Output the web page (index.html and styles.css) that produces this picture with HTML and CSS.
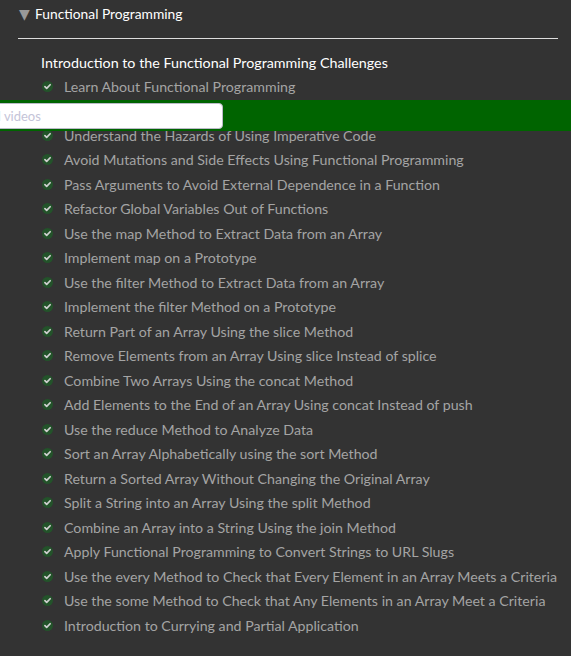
FILE: index.html
```html
<!DOCTYPE html>
<html>
<head>
<meta charset="utf-8">
<link rel="stylesheet" href="styles.css">
</head>
<body>
<div class="page">
  <div class="block-head">
    <span class="caret">&#9660;</span>
    <span class="block-title">Functional Programming</span>
  </div>
  <div class="rule"></div>
  <div class="section">
    <h4 class="section-title">Introduction to the Functional Programming Challenges</h4>
    <ul class="list">
      <li><svg class="check" viewBox="0 0 12 12"><circle cx="6" cy="6" r="6"/><path d="M3.2 6.2 L5.1 8 L8.9 4.1"/></svg><span>Learn About Functional Programming</span></li>
      <li><svg class="check" viewBox="0 0 12 12"><circle cx="6" cy="6" r="6"/><path d="M3.2 6.2 L5.1 8 L8.9 4.1"/></svg><span>Understand Functional Programming Terminology</span></li>
      <li><svg class="check" viewBox="0 0 12 12"><circle cx="6" cy="6" r="6"/><path d="M3.2 6.2 L5.1 8 L8.9 4.1"/></svg><span>Understand the Hazards of Using Imperative Code</span></li>
      <li><svg class="check" viewBox="0 0 12 12"><circle cx="6" cy="6" r="6"/><path d="M3.2 6.2 L5.1 8 L8.9 4.1"/></svg><span>Avoid Mutations and Side Effects Using Functional Programming</span></li>
      <li><svg class="check" viewBox="0 0 12 12"><circle cx="6" cy="6" r="6"/><path d="M3.2 6.2 L5.1 8 L8.9 4.1"/></svg><span>Pass Arguments to Avoid External Dependence in a Function</span></li>
      <li><svg class="check" viewBox="0 0 12 12"><circle cx="6" cy="6" r="6"/><path d="M3.2 6.2 L5.1 8 L8.9 4.1"/></svg><span>Refactor Global Variables Out of Functions</span></li>
      <li><svg class="check" viewBox="0 0 12 12"><circle cx="6" cy="6" r="6"/><path d="M3.2 6.2 L5.1 8 L8.9 4.1"/></svg><span>Use the map Method to Extract Data from an Array</span></li>
      <li><svg class="check" viewBox="0 0 12 12"><circle cx="6" cy="6" r="6"/><path d="M3.2 6.2 L5.1 8 L8.9 4.1"/></svg><span>Implement map on a Prototype</span></li>
      <li><svg class="check" viewBox="0 0 12 12"><circle cx="6" cy="6" r="6"/><path d="M3.2 6.2 L5.1 8 L8.9 4.1"/></svg><span>Use the filter Method to Extract Data from an Array</span></li>
      <li><svg class="check" viewBox="0 0 12 12"><circle cx="6" cy="6" r="6"/><path d="M3.2 6.2 L5.1 8 L8.9 4.1"/></svg><span>Implement the filter Method on a Prototype</span></li>
      <li><svg class="check" viewBox="0 0 12 12"><circle cx="6" cy="6" r="6"/><path d="M3.2 6.2 L5.1 8 L8.9 4.1"/></svg><span>Return Part of an Array Using the slice Method</span></li>
      <li><svg class="check" viewBox="0 0 12 12"><circle cx="6" cy="6" r="6"/><path d="M3.2 6.2 L5.1 8 L8.9 4.1"/></svg><span>Remove Elements from an Array Using slice Instead of splice</span></li>
      <li><svg class="check" viewBox="0 0 12 12"><circle cx="6" cy="6" r="6"/><path d="M3.2 6.2 L5.1 8 L8.9 4.1"/></svg><span>Combine Two Arrays Using the concat Method</span></li>
      <li><svg class="check" viewBox="0 0 12 12"><circle cx="6" cy="6" r="6"/><path d="M3.2 6.2 L5.1 8 L8.9 4.1"/></svg><span>Add Elements to the End of an Array Using concat Instead of push</span></li>
      <li><svg class="check" viewBox="0 0 12 12"><circle cx="6" cy="6" r="6"/><path d="M3.2 6.2 L5.1 8 L8.9 4.1"/></svg><span>Use the reduce Method to Analyze Data</span></li>
      <li><svg class="check" viewBox="0 0 12 12"><circle cx="6" cy="6" r="6"/><path d="M3.2 6.2 L5.1 8 L8.9 4.1"/></svg><span>Sort an Array Alphabetically using the sort Method</span></li>
      <li><svg class="check" viewBox="0 0 12 12"><circle cx="6" cy="6" r="6"/><path d="M3.2 6.2 L5.1 8 L8.9 4.1"/></svg><span>Return a Sorted Array Without Changing the Original Array</span></li>
      <li><svg class="check" viewBox="0 0 12 12"><circle cx="6" cy="6" r="6"/><path d="M3.2 6.2 L5.1 8 L8.9 4.1"/></svg><span>Split a String into an Array Using the split Method</span></li>
      <li><svg class="check" viewBox="0 0 12 12"><circle cx="6" cy="6" r="6"/><path d="M3.2 6.2 L5.1 8 L8.9 4.1"/></svg><span>Combine an Array into a String Using the join Method</span></li>
      <li><svg class="check" viewBox="0 0 12 12"><circle cx="6" cy="6" r="6"/><path d="M3.2 6.2 L5.1 8 L8.9 4.1"/></svg><span>Apply Functional Programming to Convert Strings to URL Slugs</span></li>
      <li><svg class="check" viewBox="0 0 12 12"><circle cx="6" cy="6" r="6"/><path d="M3.2 6.2 L5.1 8 L8.9 4.1"/></svg><span>Use the every Method to Check that Every Element in an Array Meets a Criteria</span></li>
      <li><svg class="check" viewBox="0 0 12 12"><circle cx="6" cy="6" r="6"/><path d="M3.2 6.2 L5.1 8 L8.9 4.1"/></svg><span>Use the some Method to Check that Any Elements in an Array Meet a Criteria</span></li>
      <li><svg class="check" viewBox="0 0 12 12"><circle cx="6" cy="6" r="6"/><path d="M3.2 6.2 L5.1 8 L8.9 4.1"/></svg><span>Introduction to Currying and Partial Application</span></li>
    </ul>
  </div>
</div>
<div class="search-bar">
  <input class="search-input" type="text" placeholder="Search tutorial videos">
</div>
</body>
</html>
```
FILE: styles.css
```css
html, body {
  margin: 0;
  padding: 0;
  background: #333333;
  font-family: "Lato", "Noto Sans", sans-serif;
  overflow: hidden;
}

.page {
  padding: 0 13px 0 18px;
}

.block-head {
  display: flex;
  align-items: center;
  height: 27px;
  padding-left: 1px;
}

.caret {
  color: #999999;
  font-size: 14px;
  width: 16px;
  line-height: 1;
  font-family: "DejaVu Sans", sans-serif;
}

.block-title {
  color: #ffffff;
  font-size: 13.8px;
}

.rule {
  margin-top: 11px;
  height: 1px;
  background: #dddddd;
}

.section {
  padding-left: 23px;
  padding-top: 12px;
}

.section-title {
  margin: 0;
  color: #ffffff;
  font-size: 14.3px;
  font-weight: 400;
  line-height: 23px;
}

.list {
  list-style: none;
  margin: 0;
  padding: 0;
}

.list li {
  display: flex;
  align-items: center;
  height: 24.5px;
  color: #a4a4a4;
  font-size: 14.2px;
  white-space: nowrap;
}

.check {
  width: 11px;
  height: 11px;
  margin-left: 1px;
  margin-right: 11px;
  flex: none;
}

.check circle {
  fill: #23532a;
}

.check path {
  fill: none;
  stroke: #d0d0d0;
  stroke-width: 1.9;
  stroke-linecap: round;
  stroke-linejoin: round;
}

.search-bar {
  position: absolute;
  top: 100px;
  left: 0;
  right: 0;
  height: 31px;
  background: #006400;
}

.search-input {
  position: absolute;
  top: 3px;
  left: -89px;
  width: 312px;
  height: 26px;
  box-sizing: border-box;
  border: 1px solid #bbbbc8;
  border-radius: 4px;
  background: #ffffff;
  padding: 0 6px;
  font-family: "Lato", "Noto Sans", sans-serif;
  font-size: 13px;
  outline: none;
}

.search-input::placeholder {
  color: #c4c4d8;
}
```
